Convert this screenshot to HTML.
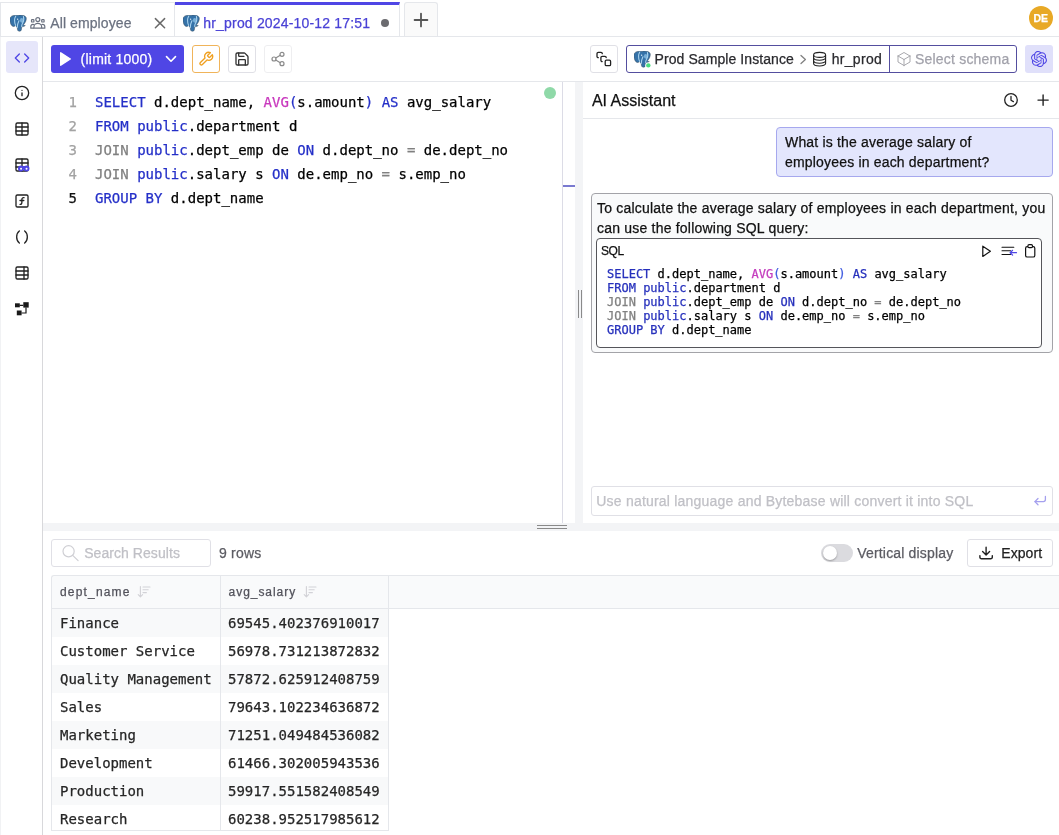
<!DOCTYPE html>
<html lang="en">
<head>
<meta charset="utf-8">
<title>SQL Editor</title>
<style>
*{box-sizing:border-box;margin:0;padding:0}
html,body{width:1059px;height:835px;overflow:hidden;background:#fff}
body{font-family:"Liberation Sans",sans-serif;color:#18181b;position:relative;font-size:14px}
#wrap{position:absolute;left:0;top:0;width:1059px;height:835px;will-change:transform;-webkit-text-stroke:.25px}
.abs{position:absolute}
.mono{font-family:"DejaVu Sans Mono","Liberation Mono",monospace}
svg{display:block}
/* tab bar */
#tabbar{left:0;top:0;width:1059px;height:37px;border-bottom:1px solid #e5e7eb;background:#fff}
.tab{top:2px;height:34px;border-top:1px solid #e5e7eb;border-right:1px solid #e5e7eb;font-size:14px;line-height:20px;white-space:nowrap}
.tab span{position:absolute;top:10px}
/* sidebar */
#side{left:0;top:37px;width:43px;height:798px;border-right:1px solid #d8d8db;border-left:1px solid #f1f2f4}
.sico{left:14px;width:16px;height:16px}
/* toolbar */
#toolbar{left:43px;top:37px;width:1016px;height:45px;border-bottom:1px solid #e5e7eb}
.btn{border:1px solid #e0e0e6;border-radius:3px;background:#fff}
/* editor */
.ln{left:43px;width:34px;text-align:right;font-size:14px;line-height:24px;color:#a3a3a3}
.cl{left:95px;font-size:14px;line-height:24px;white-space:pre;color:#000}
.kw{color:#2530c8}.fn{color:#c838bd}.gr{color:#808080}.nm{color:#000}
.k2{color:#2630bc}.f2{color:#c43cbe}.g2{color:#808080}.p2{color:#3f5be0}
</style>
</head>
<body>
<div id="wrap">
<!-- TAB BAR -->
<div id="tabbar" class="abs"></div>
<div class="abs tab" style="left:0;width:175px;color:#6b7280;border-left:1px solid #e5e7eb"><span style="left:49.3px;letter-spacing:.09px">All employee</span></div>
<div class="abs tab" style="left:175px;width:225px;border-top:3px solid #4f46e5;color:#4a42d6;background:#fff;height:34px"><span style="left:28.3px;top:8px;letter-spacing:.18px">hr_prod 2024-10-12 17:51</span></div>
<div class="abs" style="left:404px;top:2px;width:34px;height:34px;border:1px solid #e5e7eb;border-bottom:none;border-radius:3px 3px 0 0;background:#fafafa"></div>
<div class="abs" style="left:1028.8px;top:6px;width:24px;height:24px;border-radius:12px;background:#e8a926;color:#fff;font-size:10.5px;font-weight:bold;text-align:center;line-height:24px">DE</div>

<!-- SIDEBAR -->
<div id="side" class="abs"></div>
<div class="abs" style="left:6px;top:41px;width:32px;height:32px;border-radius:3px;background:#e6e6fa"></div>

<!-- TOOLBAR -->
<div id="toolbar" class="abs"></div>
<div class="abs" style="left:51px;top:45px;width:133px;height:28px;border-radius:3px;background:#4f46e5;color:#fff;font-size:14px;line-height:28px"><span class="abs" style="left:29.6px;top:0;letter-spacing:.22px;white-space:nowrap">(limit 1000)</span></div>
<div class="abs btn" style="left:192px;top:45px;width:28px;height:28px;border-color:#f0b45a"></div>
<div class="abs btn" style="left:228px;top:45px;width:28px;height:28px"></div>
<div class="abs btn" style="left:264px;top:45px;width:28px;height:28px;border-color:#eeeef0"></div>
<div class="abs btn" style="left:590px;top:45px;width:28px;height:28px"></div>
<div class="abs" style="left:626px;top:45px;width:391px;height:28px;border:1px solid #544e9f;border-radius:3px"></div>
<div class="abs" style="left:889px;top:45px;width:1px;height:28px;background:#544e9f"></div>
<div class="abs" style="left:654.6px;top:45px;font-size:14px;line-height:28px;white-space:nowrap;letter-spacing:.075px;color:#2a2a2e">Prod Sample Instance</div>
<div class="abs" style="left:831.8px;top:45px;font-size:14px;line-height:28px;white-space:nowrap;letter-spacing:.28px;color:#2a2a2e">hr_prod</div>
<div class="abs" style="left:915px;top:45px;font-size:14px;line-height:28px;white-space:nowrap;letter-spacing:.2px;color:#a1a1aa">Select schema</div>
<div class="abs" style="left:1025px;top:45px;width:28px;height:28px;border-radius:3px;background:#e0e0fa"></div>

<!-- EDITOR -->
<div class="abs mono ln" style="top:90px">1</div>
<div class="abs mono ln" style="top:114px">2</div>
<div class="abs mono ln" style="top:138px">3</div>
<div class="abs mono ln" style="top:162px">4</div>
<div class="abs mono ln" style="top:186px;color:#111">5</div>
<div class="abs mono cl" style="top:90px"><span class="kw">SELECT</span> d.dept_name, <span class="fn">AVG</span><span class="kw">(</span>s.amount<span class="kw">)</span> <span class="kw">AS</span> avg_salary</div>
<div class="abs mono cl" style="top:114px"><span class="kw">FROM</span> <span class="kw">public</span>.department d</div>
<div class="abs mono cl" style="top:138px"><span class="gr">JOIN</span> <span class="kw">public</span>.dept_emp de <span class="kw">ON</span> d.dept_no <span class="gr">=</span> de.dept_no</div>
<div class="abs mono cl" style="top:162px"><span class="gr">JOIN</span> <span class="kw">public</span>.salary s <span class="kw">ON</span> de.emp_no <span class="gr">=</span> s.emp_no</div>
<div class="abs mono cl" style="top:186px"><span class="kw">GROUP BY</span> d.dept_name</div>

<!-- editor right gutter / splitter -->
<div class="abs" style="left:562px;top:82px;width:1px;height:441px;background:#dcdce6"></div>
<div class="abs" style="left:563px;top:185px;width:12px;height:2px;background:#7a7ad0"></div>
<div class="abs" style="left:575px;top:82px;width:8px;height:441px;background:#f3f4f6"></div>
<div class="abs" style="left:578px;top:290px;width:1px;height:28px;background:#8a8a8a"></div>
<div class="abs" style="left:581px;top:290px;width:1px;height:28px;background:#8a8a8a"></div>
<div class="abs" style="left:544px;top:87px;width:12px;height:12px;border-radius:6px;background:#8fd9a8"></div>

<!-- AI PANEL -->
<div class="abs" style="left:583px;top:82px;width:476px;height:37px;border-bottom:1px solid #e5e7eb"></div>
<div class="abs" style="left:591.9px;top:90px;font-size:16px;line-height:22px;white-space:nowrap;color:#111">AI Assistant</div>
<div class="abs" style="left:776px;top:127px;width:277px;height:50px;border:1px solid #a6a8ee;border-radius:4px;background:#e3e6fd"></div>
<div class="abs" style="left:785px;top:132px;font-size:14px;line-height:20px;white-space:nowrap;letter-spacing:.18px;color:#111">What is the average salary of<br>employees in each department?</div>
<div class="abs" style="left:591px;top:193px;width:462px;height:160px;border:1px solid #a3a3a8;border-radius:4px;background:#f9fafb"></div>
<div class="abs" style="left:597px;top:198px;font-size:14px;line-height:20px;white-space:nowrap;letter-spacing:.208px;color:#111">To calculate the average salary of employees in each department, you<br>can use the following SQL query:</div>
<div class="abs" style="left:596px;top:238px;width:446px;height:110px;border:1px solid #55555a;border-radius:4px;background:#fff"></div>
<div class="abs" style="left:601px;top:243px;font-size:12px;line-height:16px;letter-spacing:-.4px;color:#111">SQL</div>
<div class="abs mono" style="left:607px;top:267px;font-size:12px;line-height:14px;white-space:pre;color:#000"><span class="k2">SELECT</span> d.dept_name, <span class="f2">AVG</span><span class="p2">(</span>s.amount<span class="p2">)</span> <span class="k2">AS</span> avg_salary
<span class="k2">FROM</span> <span class="k2">public</span>.department d
<span class="g2">JOIN</span> <span class="k2">public</span>.dept_emp de <span class="k2">ON</span> d.dept_no <span class="g2">=</span> de.dept_no
<span class="g2">JOIN</span> <span class="k2">public</span>.salary s <span class="k2">ON</span> de.emp_no <span class="g2">=</span> s.emp_no
<span class="k2">GROUP BY</span> d.dept_name</div>
<div class="abs" style="left:591px;top:486px;width:462px;height:30px;border:1px solid #e0e0e6;border-radius:3px;background:#fff"></div>
<div class="abs" style="left:596.3px;top:486px;font-size:14px;line-height:30px;white-space:nowrap;letter-spacing:.209px;color:#c0c0c6">Use natural language and Bytebase will convert it into SQL</div>

<!-- horizontal splitter -->
<div class="abs" style="left:43px;top:523px;width:1016px;height:8px;background:#f3f4f6"></div>
<div class="abs" style="left:537px;top:525px;width:30px;height:1px;background:#8a8a8a"></div>
<div class="abs" style="left:537px;top:528px;width:30px;height:1px;background:#8a8a8a"></div>

<!-- RESULTS -->
<div class="abs btn" style="left:51px;top:539px;width:160px;height:28px"></div>
<div class="abs" style="left:84.2px;top:539px;font-size:14px;line-height:28px;white-space:nowrap;letter-spacing:.06px;color:#c0c0c6">Search Results</div>
<div class="abs" style="left:219px;top:539px;font-size:14px;line-height:28px;white-space:nowrap;letter-spacing:.2px;color:#5c5c63">9 rows</div>
<div class="abs" style="left:821px;top:544px;width:32px;height:18px;border-radius:9px;background:#dbdbdf"></div>
<div class="abs" style="left:823px;top:546px;width:14px;height:14px;border-radius:7px;background:#fff;box-shadow:0 1px 2px rgba(0,0,0,.3)"></div>
<div class="abs" style="left:857.3px;top:539px;font-size:14px;line-height:28px;white-space:nowrap;letter-spacing:.167px;color:#5c5c63">Vertical display</div>
<div class="abs btn" style="left:967px;top:539px;width:86px;height:28px"></div>
<div class="abs" style="left:1001.3px;top:539px;font-size:14px;line-height:28px;white-space:nowrap;letter-spacing:.06px;color:#222">Export</div>

<div class="abs" style="left:51px;top:575px;width:1008px;height:34px;background:#f9fafb;border-top:1px solid #e5e7eb;border-bottom:1px solid #e5e7eb;border-left:1px solid #e5e7eb;border-top-left-radius:3px"></div>
<div class="abs" style="left:60px;top:576px;font-size:12px;line-height:32px;letter-spacing:1.17px;white-space:nowrap;color:#52525b">dept_name</div>
<div class="abs" style="left:228.6px;top:576px;font-size:12px;line-height:32px;letter-spacing:.95px;white-space:nowrap;color:#52525b">avg_salary</div>
<div class="abs" style="left:52px;top:609px;width:336px;height:28px;background:#f8f9fa"></div>
<div class="abs mono" style="left:60px;top:609px;font-size:14px;line-height:28px;white-space:pre;color:#262626">Finance</div>
<div class="abs mono" style="left:228px;top:609px;font-size:14px;line-height:28px;white-space:pre;color:#262626">69545.402376910017</div>
<div class="abs" style="left:52px;top:637px;width:336px;height:28px;background:#fff"></div>
<div class="abs mono" style="left:60px;top:637px;font-size:14px;line-height:28px;white-space:pre;color:#262626">Customer Service</div>
<div class="abs mono" style="left:228px;top:637px;font-size:14px;line-height:28px;white-space:pre;color:#262626">56978.731213872832</div>
<div class="abs" style="left:52px;top:665px;width:336px;height:28px;background:#f8f9fa"></div>
<div class="abs mono" style="left:60px;top:665px;font-size:14px;line-height:28px;white-space:pre;color:#262626">Quality Management</div>
<div class="abs mono" style="left:228px;top:665px;font-size:14px;line-height:28px;white-space:pre;color:#262626">57872.625912408759</div>
<div class="abs" style="left:52px;top:693px;width:336px;height:28px;background:#fff"></div>
<div class="abs mono" style="left:60px;top:693px;font-size:14px;line-height:28px;white-space:pre;color:#262626">Sales</div>
<div class="abs mono" style="left:228px;top:693px;font-size:14px;line-height:28px;white-space:pre;color:#262626">79643.102234636872</div>
<div class="abs" style="left:52px;top:721px;width:336px;height:28px;background:#f8f9fa"></div>
<div class="abs mono" style="left:60px;top:721px;font-size:14px;line-height:28px;white-space:pre;color:#262626">Marketing</div>
<div class="abs mono" style="left:228px;top:721px;font-size:14px;line-height:28px;white-space:pre;color:#262626">71251.049484536082</div>
<div class="abs" style="left:52px;top:749px;width:336px;height:28px;background:#fff"></div>
<div class="abs mono" style="left:60px;top:749px;font-size:14px;line-height:28px;white-space:pre;color:#262626">Development</div>
<div class="abs mono" style="left:228px;top:749px;font-size:14px;line-height:28px;white-space:pre;color:#262626">61466.302005943536</div>
<div class="abs" style="left:52px;top:777px;width:336px;height:28px;background:#f8f9fa"></div>
<div class="abs mono" style="left:60px;top:777px;font-size:14px;line-height:28px;white-space:pre;color:#262626">Production</div>
<div class="abs mono" style="left:228px;top:777px;font-size:14px;line-height:28px;white-space:pre;color:#262626">59917.551582408549</div>
<div class="abs" style="left:52px;top:805px;width:336px;height:28px;background:#fff"></div>
<div class="abs mono" style="left:60px;top:805px;font-size:14px;line-height:28px;white-space:pre;color:#262626">Research</div>
<div class="abs mono" style="left:228px;top:805px;font-size:14px;line-height:28px;white-space:pre;color:#262626">60238.952517985612</div>

<div class="abs" style="left:52px;top:831px;width:1007px;height:4px;background:#fff"></div>
<div class="abs" style="left:51px;top:830px;width:338px;height:1px;background:#e5e7eb"></div>
<div class="abs" style="left:51px;top:578px;width:1px;height:253px;background:#e5e7eb"></div>
<div class="abs" style="left:220px;top:575px;width:1px;height:256px;background:#e5e7eb"></div>
<div class="abs" style="left:388px;top:575px;width:1px;height:256px;background:#e5e7eb"></div>

<!-- ICONS -->
<svg class="abs" style="left:10px;top:15px" width="19" height="17.9" viewBox="0.6 0.3 17 17" preserveAspectRatio="none"><path fill="#3572a8" stroke="#3b4a5a" stroke-width=".45" d="M8 0.6C5.8 0.2 2.2 0.3 0.9 2.6C-0.2 4.8 0.9 9.2 2.6 10.8C3.6 11.7 4.8 11.2 5.6 10.2C5.9 11 6.5 11.8 7.1 12.2L7.3 14.3C7.5 16.1 10.5 16.2 10.8 14.2L11.1 11.3C12.1 11.6 13.4 11.2 14.3 10.3C13.5 10.4 12.8 10.3 12.5 9.9C14.4 7.6 15.7 4.6 15 2.6C14.2 0.5 10.5 0.1 8 0.6Z"/><ellipse cx="11" cy="5.4" rx="1.5" ry="2.3" fill="#8fc4e8" opacity=".75"/><g fill="none" stroke="#a9d3ee" stroke-width=".95" stroke-linecap="round"><path d="M5.7 1.4C4.6 3.2 4.6 7.4 5.6 10.2"/><path d="M12.6 1.6C13.2 3.6 12.8 6.6 11.6 8.6C11.1 9.5 11 10.4 11.1 11.3"/><path d="M8.6 5.8C7.8 7.4 7.3 9.6 7.1 12.2"/></g><circle cx="7.4" cy="4.3" r=".6" fill="#e8f3fb"/></svg>
<svg class="abs" style="left:183px;top:15px" width="19" height="17.9" viewBox="0.6 0.3 17 17" preserveAspectRatio="none"><path fill="#3572a8" stroke="#3b4a5a" stroke-width=".45" d="M8 0.6C5.8 0.2 2.2 0.3 0.9 2.6C-0.2 4.8 0.9 9.2 2.6 10.8C3.6 11.7 4.8 11.2 5.6 10.2C5.9 11 6.5 11.8 7.1 12.2L7.3 14.3C7.5 16.1 10.5 16.2 10.8 14.2L11.1 11.3C12.1 11.6 13.4 11.2 14.3 10.3C13.5 10.4 12.8 10.3 12.5 9.9C14.4 7.6 15.7 4.6 15 2.6C14.2 0.5 10.5 0.1 8 0.6Z"/><ellipse cx="11" cy="5.4" rx="1.5" ry="2.3" fill="#8fc4e8" opacity=".75"/><g fill="none" stroke="#a9d3ee" stroke-width=".95" stroke-linecap="round"><path d="M5.7 1.4C4.6 3.2 4.6 7.4 5.6 10.2"/><path d="M12.6 1.6C13.2 3.6 12.8 6.6 11.6 8.6C11.1 9.5 11 10.4 11.1 11.3"/><path d="M8.6 5.8C7.8 7.4 7.3 9.6 7.1 12.2"/></g><circle cx="7.4" cy="4.3" r=".6" fill="#e8f3fb"/></svg>
<svg class="abs" style="left:634px;top:51px" width="19" height="17.9" viewBox="0.6 0.3 17 17" preserveAspectRatio="none"><path fill="#3572a8" stroke="#3b4a5a" stroke-width=".45" d="M8 0.6C5.8 0.2 2.2 0.3 0.9 2.6C-0.2 4.8 0.9 9.2 2.6 10.8C3.6 11.7 4.8 11.2 5.6 10.2C5.9 11 6.5 11.8 7.1 12.2L7.3 14.3C7.5 16.1 10.5 16.2 10.8 14.2L11.1 11.3C12.1 11.6 13.4 11.2 14.3 10.3C13.5 10.4 12.8 10.3 12.5 9.9C14.4 7.6 15.7 4.6 15 2.6C14.2 0.5 10.5 0.1 8 0.6Z"/><ellipse cx="11" cy="5.4" rx="1.5" ry="2.3" fill="#8fc4e8" opacity=".75"/><g fill="none" stroke="#a9d3ee" stroke-width=".95" stroke-linecap="round"><path d="M5.7 1.4C4.6 3.2 4.6 7.4 5.6 10.2"/><path d="M12.6 1.6C13.2 3.6 12.8 6.6 11.6 8.6C11.1 9.5 11 10.4 11.1 11.3"/><path d="M8.6 5.8C7.8 7.4 7.3 9.6 7.1 12.2"/></g><circle cx="7.4" cy="4.3" r=".6" fill="#e8f3fb"/><circle cx="13.4" cy="14" r="2.7" fill="#fff"/><circle cx="13.4" cy="14" r="2" fill="#4ade80"/></svg>
<svg class="abs" style="left:30px;top:16px" width="16" height="14" viewBox="0 0 16 14" fill="none" stroke="#6b7280" stroke-width="1.2" stroke-linejoin="round"><circle cx="7.8" cy="3.6" r="2"/><path d="M3.9 12.2v-1a3.9 3.9 0 0 1 7.8 0v1z"/><rect x="1.5" y="3.6" width="2.4" height="2.4" rx=".6"/><rect x="11.7" y="3.6" width="2.4" height="2.4" rx=".6"/><path d="M3.9 12.2H.8v-1.6a2.2 2.2 0 0 1 3.4-1.9"/><path d="M11.7 12.2h3.1v-1.6a2.2 2.2 0 0 0-3.4-1.9"/></svg>
<svg class="abs" style="left:154px;top:17px" width="12" height="12" viewBox="0 0 12 12" stroke="#6a6a6a" stroke-width="1.5" stroke-linecap="round"><path d="M1.4 1.6l9.2 9.2M10.6 1.6l-9.2 9.2"/></svg>
<div class="abs" style="left:381px;top:18.5px;width:8.4px;height:8.4px;border-radius:5px;background:#6b6b6f"></div>
<svg class="abs" style="left:413px;top:12px" width="16" height="16" viewBox="0 0 16 16" stroke="#555" stroke-width="1.8" stroke-linecap="round"><path d="M8 1.6v12.8M1.6 8h12.8"/></svg>
<svg class="abs" style="left:14.0px;top:49.5px" width="16" height="16" viewBox="0 0 24 24" fill="none" stroke="#4f46e5" stroke-width="2" stroke-linecap="round" stroke-linejoin="round"><polyline points="16 18 22 12 16 6"/><polyline points="8 6 2 12 8 18"/></svg>
<svg class="abs" style="left:14.0px;top:85.0px" width="16" height="16" viewBox="0 0 24 24" fill="none" stroke="#222" stroke-width="2" stroke-linecap="round" stroke-linejoin="round"><circle cx="12" cy="12" r="10"/><path d="M12 16v-4"/><path d="M12 8h.01"/></svg>
<svg class="abs" style="left:14.0px;top:121.0px" width="16" height="16" viewBox="0 0 24 24" fill="none" stroke="#222" stroke-width="2" stroke-linecap="round" stroke-linejoin="round"><path d="M12 3v18"/><rect width="18" height="18" x="3" y="3" rx="2"/><path d="M3 9h18"/><path d="M3 15h18"/></svg>
<svg class="abs" style="left:14.0px;top:157.0px" width="16" height="16" viewBox="0 0 24 24" fill="none" stroke="#222" stroke-width="2" stroke-linecap="round" stroke-linejoin="round"><path d="M12 3v18"/><rect width="18" height="18" x="3" y="3" rx="2"/><path d="M3 9h18"/><path d="M3 15h18"/><g stroke="none" fill="#4f46e5"><circle cx="10.4" cy="17.3" r="4.4"/><circle cx="18.8" cy="17.3" r="4.4"/><rect x="10" y="13.6" width="9" height="5"/></g><g stroke="none" fill="#fff"><circle cx="10.6" cy="17.8" r="1.5"/><circle cx="18.8" cy="17.8" r="1.5"/></g></svg>
<svg class="abs" style="left:14.0px;top:193.0px" width="16" height="16" viewBox="0 0 24 24" fill="none" stroke="#222" stroke-width="2" stroke-linecap="round" stroke-linejoin="round"><rect width="18" height="18" x="3" y="3" rx="2" ry="2"/><path d="M9 17c2 0 2.8-1 2.8-2.8V10c0-2 1-3.3 3.2-3"/><path d="M9 11.2h5.7"/></svg>
<svg class="abs" style="left:14.0px;top:229.0px" width="16" height="16" viewBox="0 0 24 24" fill="none" stroke="#222" stroke-width="2" stroke-linecap="round" stroke-linejoin="round"><path d="M8 21s-4-3-4-9 4-9 4-9"/><path d="M16 3s4 3 4 9-4 9-4 9"/></svg>
<svg class="abs" style="left:14.0px;top:265.0px" width="16" height="16" viewBox="0 0 24 24" fill="none" stroke="#222" stroke-width="2" stroke-linecap="round" stroke-linejoin="round"><path d="M15 3v18"/><rect width="18" height="18" x="3" y="3" rx="2"/><path d="M21 9H3"/><path d="M21 15H3"/></svg>
<svg class="abs" style="left:14px;top:301px" width="16" height="16" viewBox="0 0 16 16" fill="#1a1a1a" stroke="#1a1a1a" stroke-width="1.2"><rect x="1" y="2.3" width="4.8" height="4" stroke="none"/><rect x="9.3" y="1.2" width="5.4" height="5.4" stroke="none"/><rect x="2.8" y="9.5" width="4.8" height="4.8" stroke="none"/><path fill="none" d="M5.6 4.3h3.7M12 6.6v5.4H7.5"/></svg>
<svg class="abs" style="left:58px;top:50px" width="16" height="18" viewBox="0 0 16 18" fill="#fff" stroke="#fff" stroke-width="1.4" stroke-linejoin="round"><path d="M2.7 2.8v12.4l9.6-6.2z"/></svg>
<svg class="abs" style="left:164px;top:53px" width="14" height="12" viewBox="0 0 14 12" fill="none" stroke="#fff" stroke-width="1.6" stroke-linecap="round" stroke-linejoin="round"><path d="M2.5 3.6l4.5 4.6 4.5-4.6"/></svg>
<svg class="abs" style="left:198.0px;top:51.0px" width="16" height="16" viewBox="0 0 24 24" fill="none" stroke="#f0a020" stroke-width="2" stroke-linecap="round" stroke-linejoin="round"><path d="M14.7 6.3a1 1 0 0 0 0 1.4l1.6 1.6a1 1 0 0 0 1.4 0l3.77-3.77a6 6 0 0 1-7.94 7.94l-6.91 6.91a2.12 2.12 0 0 1-3-3l6.91-6.91a6 6 0 0 1 7.94-7.94l-3.76 3.76z"/></svg>
<svg class="abs" style="left:234.0px;top:51.0px" width="16" height="16" viewBox="0 0 24 24" fill="none" stroke="#333" stroke-width="2" stroke-linecap="round" stroke-linejoin="round"><path d="M15.2 3a2 2 0 0 1 1.4.6l3.8 3.8a2 2 0 0 1 .6 1.4V19a2 2 0 0 1-2 2H5a2 2 0 0 1-2-2V5a2 2 0 0 1 2-2z"/><path d="M17 21v-7a1 1 0 0 0-1-1H8a1 1 0 0 0-1 1v7"/><path d="M7 3v4a1 1 0 0 0 1 1h7"/></svg>
<svg class="abs" style="left:270.0px;top:51.0px" width="16" height="16" viewBox="0 0 24 24" fill="none" stroke="#8a8a8a" stroke-width="1.8" stroke-linecap="round" stroke-linejoin="round"><circle cx="18" cy="5" r="3"/><circle cx="6" cy="12" r="3"/><circle cx="18" cy="19" r="3"/><line x1="8.59" x2="15.42" y1="13.51" y2="17.49"/><line x1="15.41" x2="8.59" y1="6.51" y2="10.49"/></svg>
<svg class="abs" style="left:596px;top:51px" width="16" height="16" viewBox="0 0 16 16" fill="none" stroke="#222" stroke-width="1.3" stroke-linecap="round" stroke-linejoin="round"><rect x="9.2" y="9.2" width="5.4" height="5.4" rx="1.2"/><path d="M6.2 10.6a1.3 1.3 0 0 1-1.3-1.3V6.6a1.3 1.3 0 0 1 1.3-1.3h2.7a1.3 1.3 0 0 1 1.3 1.3"/><path d="M2.3 6.7a1.3 1.3 0 0 1-1.3-1.3V2.7a1.3 1.3 0 0 1 1.3-1.3H5a1.3 1.3 0 0 1 1.3 1.3"/></svg>
<svg class="abs" style="left:798px;top:53px" width="10" height="13" viewBox="0 0 10 13" fill="none" stroke="#808080" stroke-width="1.3" stroke-linecap="round" stroke-linejoin="round"><path d="M3 2.4l4.4 4.1L3 10.6"/></svg>
<svg class="abs" style="left:812px;top:51px" width="16" height="16" viewBox="0 0 16 16" fill="none" stroke="#222" stroke-width="1.1"><ellipse cx="7.6" cy="3.9" rx="6" ry="2.5"/><path d="M1.6 3.9v8.6a6 2.5 0 0 0 12 0V3.9"/><path d="M1.6 6.8a6 2.5 0 0 0 12 0"/><path d="M1.6 9.7a6 2.5 0 0 0 12 0"/></svg>
<svg class="abs" style="left:895.8px;top:50.9px" width="16" height="16" viewBox="0 0 24 24" fill="none" stroke="#a8a8ad" stroke-width="1.5" stroke-linecap="round" stroke-linejoin="round"><path d="m21 7.5-9-5.25L3 7.5m18 0-9 5.25m9-5.25v9l-9 5.25M3 7.5l9 5.25M3 7.5v9l9 5.25m0-9v9"/></svg>
<svg class="abs" style="left:1031px;top:51px" width="16" height="16" viewBox="0 0 24 24" fill="#4f46e5"><path d="M22.2819 9.8211a5.9847 5.9847 0 0 0-.5157-4.9108 6.0462 6.0462 0 0 0-6.5098-2.9A6.0651 6.0651 0 0 0 4.9807 4.1818a5.9847 5.9847 0 0 0-3.9977 2.9 6.0462 6.0462 0 0 0 .7427 7.0966 5.98 5.98 0 0 0 .511 4.9107 6.051 6.051 0 0 0 6.5146 2.9001A5.9847 5.9847 0 0 0 13.2599 24a6.0557 6.0557 0 0 0 5.7718-4.2058 5.9894 5.9894 0 0 0 3.9977-2.9001 6.0557 6.0557 0 0 0-.7475-7.0729zm-9.022 12.6081a4.4755 4.4755 0 0 1-2.8764-1.0408l.1419-.0804 4.7783-2.7582a.7948.7948 0 0 0 .3927-.6813v-6.7369l2.02 1.1686a.071.071 0 0 1 .038.052v5.5826a4.504 4.504 0 0 1-4.4945 4.4944zm-9.6607-4.1254a4.4708 4.4708 0 0 1-.5346-3.0137l.142.0852 4.783 2.7582a.7712.7712 0 0 0 .7806 0l5.8428-3.3685v2.3324a.0804.0804 0 0 1-.0332.0615L9.74 19.9502a4.4992 4.4992 0 0 1-6.1408-1.6464zM2.3408 7.8956a4.485 4.485 0 0 1 2.3655-1.9728V11.6a.7664.7664 0 0 0 .3879.6765l5.8144 3.3543-2.0201 1.1685a.0757.0757 0 0 1-.071 0l-4.8303-2.7865A4.504 4.504 0 0 1 2.3408 7.872zm16.5963 3.8558L13.1038 8.364 15.1192 7.2a.0757.0757 0 0 1 .071 0l4.8303 2.7913a4.4944 4.4944 0 0 1-.6765 8.1042v-5.6772a.79.79 0 0 0-.407-.667zm2.0107-3.0231l-.142-.0852-4.7735-2.7818a.7759.7759 0 0 0-.7854 0L9.409 9.2297V6.8974a.0662.0662 0 0 1 .0284-.0615l4.8303-2.7866a4.4992 4.4992 0 0 1 6.6802 4.66zM8.3065 12.863l-2.02-1.1638a.0804.0804 0 0 1-.038-.0567V6.0742a4.4992 4.4992 0 0 1 7.3757-3.4537l-.142.0805L8.704 5.459a.7948.7948 0 0 0-.3927.6813zm1.0976-2.3654l2.602-1.4998 2.6069 1.4998v2.9994l-2.5974 1.4997-2.6067-1.4997Z"/></svg>
<svg class="abs" style="left:1003px;top:92px" width="16" height="16" viewBox="0 0 16 16" fill="none" stroke="#222" stroke-width="1.3" stroke-linecap="round" stroke-linejoin="round"><circle cx="8" cy="8" r="6.3"/><path d="M8 4.4v3.8l2.4 1.4"/></svg>
<svg class="abs" style="left:1035px;top:92px" width="16" height="16" viewBox="0 0 16 16" stroke="#222" stroke-width="1.4" stroke-linecap="round"><path d="M8.1 3v10.2M3 8.1h10.2"/></svg>
<svg class="abs" style="left:980px;top:243px" width="60" height="16" viewBox="0 0 60 16" fill="none" stroke="#111" stroke-width="1.2" stroke-linecap="round" stroke-linejoin="round"><path d="M2.8 3.2v10.2l7.6-5.1z"/><path d="M22 4.3h11.8M22 7.8h8.5M22 11.5h8.5" stroke-width="1.1"/><path d="M36.5 9.7h-6.3M32.6 7.3l-2.5 2.4 2.5 2.4" stroke="#4f46e5" stroke-width="1.2"/><rect x="45.6" y="3.6" width="9.2" height="10.4" rx="1.6"/><rect x="47.9" y="1.7" width="4.6" height="3" rx="1.2" fill="#fff"/></svg>
<svg class="abs" style="left:1032px;top:493px" width="16" height="16" viewBox="0 0 16 16" fill="none" stroke="#a5a0ee" stroke-width="1.3" stroke-linecap="round" stroke-linejoin="round"><path d="M13.4 3.4v3.2a2 2 0 0 1-2 2H3"/><path d="M6 5.5L2.9 8.6 6 11.7"/></svg>
<svg class="abs" style="left:60px;top:543px" width="22" height="20" viewBox="0 0 22 20" fill="none" stroke="#cfcfd4" stroke-width="1.2" stroke-linecap="round"><circle cx="8.6" cy="8.3" r="5.6"/><path d="M12.7 12.4l5.4 5.2"/></svg>
<svg class="abs" style="left:978px;top:545px" width="16" height="16" viewBox="0 0 16 16" fill="none" stroke="#222" stroke-width="1.4" stroke-linecap="round" stroke-linejoin="round"><path d="M8.1 2.2v7.6M4.6 6.6l3.5 3.4 3.5-3.4"/><path d="M1.9 10.6v1.6a1.6 1.6 0 0 0 1.6 1.6h9.200a1.600 1.600 0 0 0 1.600-1.600v-1.600"/></svg>
<svg class="abs" style="left:137px;top:585px" width="14" height="14" viewBox="0 0 14 14" fill="none" stroke="#d2d2d7" stroke-width="1.1" stroke-linecap="round" stroke-linejoin="round"><path d="M3.4 1.6v10.2M1.2 9.6l2.2 2.300 2.200-2.300"/><path d="M6 2h7M6 4.800h5.200M6 7.600h3.400"/></svg>
<svg class="abs" style="left:303px;top:585px" width="14" height="14" viewBox="0 0 14 14" fill="none" stroke="#d2d2d7" stroke-width="1.1" stroke-linecap="round" stroke-linejoin="round"><path d="M3.4 1.6v10.2M1.2 9.6l2.2 2.300 2.200-2.300"/><path d="M6 2h7M6 4.800h5.200M6 7.600h3.400"/></svg>

</div>
</body>
</html>
